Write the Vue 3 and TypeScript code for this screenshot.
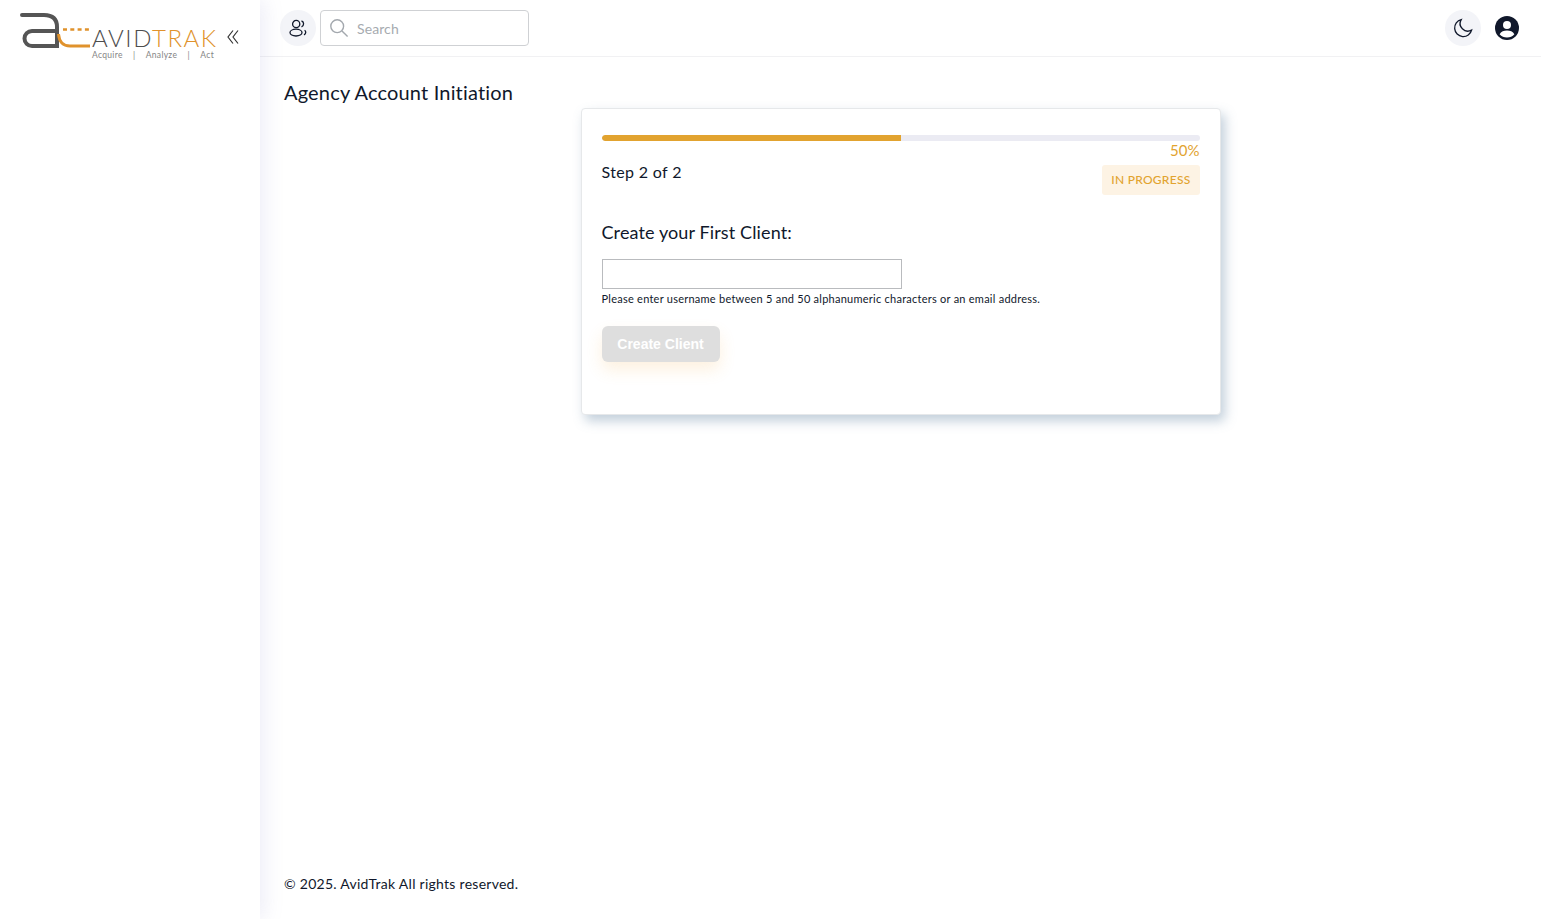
<script setup lang="ts">
import { ref } from 'vue'

const clientName = ref('')
const progress = ref(50)
</script>

<template>
  <div class="layout">
    <aside class="sidebar">
      <div class="brand">
        <svg class="brand-mark" width="72" height="38" viewBox="0 0 72 38" fill="none">
          <path d="M2 3H24Q37 3 37 15V34H12A7.500 7.500 0 0 1 12 19H37" stroke="#555" stroke-width="4" stroke-linecap="round" />
          <path d="M38.500 22Q39.500 34 50 34H70" stroke="#e0922c" stroke-width="3" />
          <path d="M43 17.500H69" stroke="#e0922c" stroke-width="2.600" stroke-dasharray="4 3.300" />
        </svg>
        <div class="brand-text">
          <div class="brand-name">AVID<span>TRAK</span></div>
          <div class="brand-tag"><span>Acquire</span><span>|</span><span>Analyze</span><span>|</span><span>Act</span></div>
        </div>
      </div>
      <svg class="collapse" width="12" height="16" viewBox="0 0 12 16" fill="none" stroke="#333" stroke-width="1.200">
        <path d="M6 1.500 1 8l5 6.500M11 1.500 6 8l5 6.500" />
      </svg>
    </aside>

    <div class="main">
      <header class="topbar">
        <div class="topbar-left">
          <button class="round-btn" type="button">
            <svg width="20" height="20" viewBox="0 0 20 20" fill="none" stroke="#10182b" stroke-width="1.300">
              <circle cx="8.200" cy="6" r="3.600" />
              <ellipse cx="8" cy="14.600" rx="6" ry="3.400" />
              <path d="M13.500 2.800a3.200 3.200 0 0 1 0 6M16.600 12.200c1.600 1.100 1.600 3.500-.6 4.600" />
            </svg>
          </button>
          <div class="search">
            <svg width="20" height="20" viewBox="0 0 20 20" fill="none" stroke="#a3a8ae" stroke-width="1.400">
              <circle cx="8.200" cy="8.200" r="6.400" />
              <path d="m13 13 5.600 5.600" />
            </svg>
            <input type="text" placeholder="Search" />
          </div>
        </div>
        <div class="topbar-right">
          <button class="round-btn" type="button">
            <svg width="20" height="20" viewBox="0 0 20 20" fill="none" stroke="#10182b" stroke-width="1.300">
              <path d="M8.200 1.600A8.600 8.600 0 1 0 18.600 12 7.600 7.600 0 0 1 8.200 1.600Z" />
            </svg>
          </button>
          <svg class="avatar" width="24" height="24" viewBox="0 0 24 24">
            <circle cx="12" cy="12" r="12" fill="#10182b" />
            <circle cx="12" cy="9" r="4" fill="#fff" />
            <path d="M4.600 18.200C6 15.600 9 14.600 12 14.600s6 1 7.400 3.600A10 10 0 0 1 12 21.400a10 10 0 0 1-7.400-3.200Z" fill="#fff" />
          </svg>
        </div>
      </header>

      <main class="content">
        <h1 class="page-title">Agency Account Initiation</h1>
        <section class="card">
          <div class="progress-track">
            <div class="progress-fill" :style="{ width: progress + '%' }"></div>
          </div>
          <div class="progress-pct">{{ progress }}%</div>
          <div class="step-row">
            <span class="step-label">Step 2 of 2</span>
            <span class="status">IN PROGRESS</span>
          </div>
          <h2 class="form-title">Create your First Client:</h2>
          <input v-model="clientName" class="client-input" type="text" />
          <p class="hint">Please enter username between 5 and 50 alphanumeric characters or an email address.</p>
          <button class="create-btn" type="button" disabled>Create Client</button>
        </section>
      </main>

      <footer class="footer">© 2025. AvidTrak All rights reserved.</footer>
    </div>
  </div>
</template>

<style>
body {
  background: #fff;
}
</style>

<style scoped>
.layout {
  display: flex;
  min-height: 100vh;
  font-family: "Lato", "Open Sans", sans-serif;
  color: #10182b;
}

.sidebar {
  width: 260px;
  flex-shrink: 0;
  display: flex;
  align-items: flex-start;
  padding: 12px 0 0 20px;
  box-sizing: border-box;
  background: #fff;
  box-shadow: 5px 0 18px rgba(120, 120, 190, 0.13);
  position: relative;
}

.brand {
  display: flex;
  align-items: flex-start;
  width: 196px;
  flex-shrink: 0;
}

.brand-mark {
  flex-shrink: 0;
}

.brand-text {
  margin-top: 13px;
}

.brand-name {
  font-size: 24px;
  line-height: 25px;
  letter-spacing: 1.55px;
  color: #4d4d4d;
  white-space: nowrap;
  font-weight: 300;
}

.brand-name span {
  color: #e0922c;
}

.brand-tag {
  display: flex;
  justify-content: space-between;
  font-size: 8.500px;
  line-height: 10px;
  letter-spacing: 0.3px;
  color: #858585;
  width: 122px;
}

.collapse {
  margin: 17px 0 0 11px;
  flex-shrink: 0;
}

.main {
  flex: 1;
  min-width: 0;
  display: flex;
  flex-direction: column;
}

.topbar {
  height: 57px;
  box-sizing: border-box;
  display: flex;
  align-items: center;
  justify-content: space-between;
  padding: 0 22px 0 20px;
  border-bottom: 1px solid #f1f1f3;
}

.topbar-left,
.topbar-right {
  display: flex;
  align-items: center;
}

.topbar-left {
  gap: 4px;
}

.topbar-right {
  gap: 14px;
}

.round-btn {
  width: 36px;
  height: 36px;
  border: 0;
  border-radius: 50%;
  background: #f3f4f8;
  display: flex;
  align-items: center;
  justify-content: center;
  padding: 0;
}

.search {
  width: 209px;
  height: 36px;
  box-sizing: border-box;
  border: 1px solid #cfd1d4;
  border-radius: 4px;
  display: flex;
  align-items: center;
  gap: 8px;
  padding: 0 8px;
}

.search input {
  border: 0;
  outline: 0;
  width: 150px;
  font: inherit;
  font-size: 14px;
  letter-spacing: 0.1px;
  padding: 0;
  background: transparent;
}

.search input::placeholder {
  color: #a6abb0;
  opacity: 1;
}

.content {
  flex: 1;
  padding: 21px 24px 0;
}

.page-title {
  margin: 0;
  font-size: 20px;
  line-height: 28px;
  letter-spacing: 0.17px;
  font-weight: 400;
}

.card {
  width: 640px;
  height: 307px;
  box-sizing: border-box;
  margin: 2px auto 0;
  padding: 26px 20px 0;
  border: 1px solid #e6e8ea;
  border-radius: 4px;
  background: #fff;
  box-shadow: 4px 6px 12px rgba(110, 140, 170, 0.42);
}

.progress-track {
  height: 6px;
  border-radius: 3px;
  background: #ebebf3;
  overflow: hidden;
}

.progress-fill {
  height: 100%;
  background: #e2a32f;
  border-radius: 3px 0 0 3px;
}

.progress-pct {
  text-align: right;
  font-size: 15px;
  line-height: 18px;
  color: #e2a32f;
}

.step-row {
  display: flex;
  align-items: flex-start;
  justify-content: space-between;
  margin-top: 6px;
}

.step-label {
  font-size: 16px;
  line-height: 20px;
  letter-spacing: 0.35px;
  margin-top: -3px;
}

.status {
  background: #fdf3e4;
  color: #e2a32f;
  font-size: 12px;
  line-height: 30px;
  letter-spacing: 0.27px;
  padding: 0 9px;
  border-radius: 3px;
  font-weight: 500;
}

.form-title {
  margin: 25px 0 0;
  font-size: 18px;
  line-height: 24px;
  letter-spacing: 0.12px;
  font-weight: 400;
}

.client-input {
  display: block;
  width: 300px;
  height: 30px;
  box-sizing: border-box;
  margin-top: 15px;
  border: 1px solid #b9bbbe;
  outline: 0;
  padding: 0 8px;
}

.hint {
  margin: 3px 0 0;
  font-size: 11px;
  line-height: 14px;
  letter-spacing: 0.25px;
}

.create-btn {
  display: block;
  width: 118px;
  height: 36px;
  margin-top: 20px;
  border: 0;
  border-radius: 6px;
  background: #dedede;
  color: #fff;
  font-family: "Liberation Sans", sans-serif;
  font-size: 14px;
  font-weight: 700;
  box-shadow: 0 8px 16px rgba(240, 170, 60, 0.16);
}

.footer {
  padding: 0 24px 25px;
  font-size: 14px;
  line-height: 20px;
  letter-spacing: 0.27px;
}
</style>
